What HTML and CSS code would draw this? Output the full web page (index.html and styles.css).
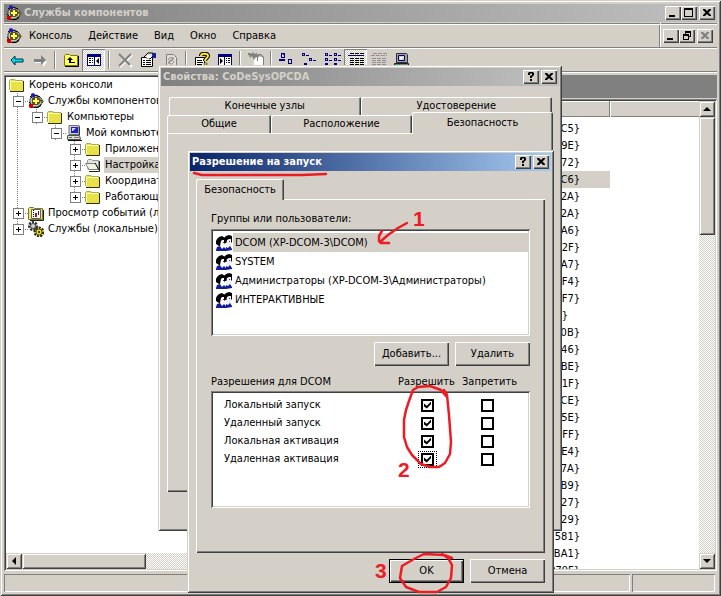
FILE: index.html
```html
<!DOCTYPE html>
<html lang="ru">
<head>
<meta charset="utf-8">
<title>Службы компонентов</title>
<link rel="stylesheet" href="styles.css">
</head>
<body>
<svg class="defs" aria-hidden="true">
  <defs>
    <symbol id="i-app" viewBox="0 0 16 16">
      <path d="M4 3l5-1 4 3 2 3-2 4-4 2H5L2 11V6z" fill="#c8c4b8" stroke="#404040" stroke-width="1"/>
      <path d="M2 3l3 3M1 9l3 3M14 8l-4-2M6 2l6 2" stroke="#000" stroke-width="1"/>
      <path d="M5 4h5l2 2v4l-2 2H5L4 10V6z" fill="#605020"/>
      <path d="M7 5h2v2h2v2H9v2H7V9H5V7h2z" fill="#ffff60"/>
      <path d="M3 1l2-1 2 1v3H4L3 3z" fill="#1a1acc"/><path d="M1 11h4v4H2l-1-1z" fill="#d00000"/><circle cx="14" cy="8.500" r="1.500" fill="#607018"/>
      <path d="M5 14h5l3-3v2l-3 2H6z" fill="#000"/>
    </symbol>
    <symbol id="i-folder" viewBox="0 0 16 16">
      <path d="M1 3l1-1h4l1 1h7v11H1z" fill="#e8e248"/><path d="M.5 13V3.500L1.500 2.500h4l1 1h7.500" fill="none" stroke="#b0a850"/>
      <path d="M1.500 13V4.500H13" fill="none" stroke="#ffffb0"/><path d="M14.500 4v10.500H1" fill="none" stroke="#303018"/>
    </symbol>
    <symbol id="i-open" viewBox="0 0 16 16">
      <path d="M2.500 3.500l1-1h3l1 1h6v9H3z" fill="#e8e4dc" stroke="#909090"/><path d="M.5 6.500h10l3 6H4z" fill="#f4f2e0" stroke="#808080"/>
      <path d="M10 6l4 7M14.500 4v10.500H4" fill="none" stroke="#202020"/>
    </symbol>
    <symbol id="i-pc" viewBox="0 0 16 16">
      <path d="M3 .5h10v9H3z" fill="#d4d0c8" stroke="#707070"/><path d="M13 1l1 1v8h-1" fill="#303030"/>
      <path d="M5 2h7v6H5z" fill="#2020c0"/><path d="M6 3h4L7 6H6z" fill="#d0d8ff"/><path d="M1.500 10.500h12l1 4h-13z" fill="#e0dcd4" stroke="#505050"/>
      <path d="M3 12h3v1H3z" fill="#00a060"/><path d="M8 12h5v1H8z" fill="#808080"/><path d="M2 15h14v1H2z" fill="#101010"/>
    </symbol>
    <symbol id="i-events" viewBox="0 0 16 16">
      <path d="M.5 3.500l1-1h4l1 1h8v11H.5z" fill="#f0e868" stroke="#807820"/><path d="M3.500 4.500h9v9h-9z" fill="#fff" stroke="#606060"/>
      <path d="M5 5h1v1H5zm0 2h1v1H5zm0 2h1v1H5zm0 2h1v1H5z" fill="#000"/><path d="M7 8h2v4H7z" fill="#e00000"/><path d="M10 6h1v4h-1z" fill="#1010e0"/><path d="M2 15.500h13.500V5" fill="none" stroke="#202020"/>
    </symbol>
    <symbol id="i-gears" viewBox="0 0 16 16">
      <circle cx="5" cy="5" r="3.500" fill="none" stroke="#303030" stroke-width="3" stroke-dasharray="2 1"/><circle cx="5" cy="5" r="2.500" fill="#d0d0d0" stroke="#505050"/>
      <circle cx="11" cy="11" r="4" fill="none" stroke="#303000" stroke-width="3" stroke-dasharray="2 1"/><circle cx="11" cy="11" r="3" fill="#f0e020" stroke="#605800"/><circle cx="11" cy="11" r="1" fill="#000"/>
    </symbol>
    <symbol id="i-users" viewBox="0 0 16 16">
      <path d="M8 3l2-2 3-1 3 1v4l-2-1-2 1-1 3H8z" fill="#000"/>
      <path d="M11 5l2-1h2v3l1 1-1 1v2l-3 1-2-2z" fill="#f0f0f4"/><path d="M15 4h1v4l-1-1z" fill="#000"/><path d="M13 6h1v1h-1z" fill="#2030c0"/>
      <path d="M1 4l2-2 3-1 3 2v3L7 5 5 6v5H3L0 9V6z" fill="#000"/>
      <path d="M5 6l2-1h1l1 3-1 1v2l-2 1-2-1z" fill="#fff"/><path d="M7 7h1v1H7z" fill="#2030c0"/><path d="M8 5h1v4L8 8z" fill="#000"/>
      <path d="M0 15l1-3 3-1 2 3 2-2 2 2v2H0zM10 12l2 1 2-2 2 3v1l-6 1z" fill="#101c98"/>
    </symbol>
    <symbol id="i-min" viewBox="0 0 12 10"><path d="M2 7h6v2H2z"/></symbol>
    <symbol id="i-max" viewBox="0 0 12 10"><path d="M1 0h9v9H1zM2 2v6h7V2z" fill-rule="evenodd"/></symbol>
    <symbol id="i-restore" viewBox="0 0 12 10"><path d="M4 0h6v6H8v3H2V3h2zM5 2v1h3v2h1V2zM3 5v3h4V5z" fill-rule="evenodd"/></symbol>
    <symbol id="i-x" viewBox="0 0 12 10"><path d="M2 1h2l2 2 2-2h2v1L7.500 4.500 10 7v1H8L6 6 4 8H2V7l2.500-2.500L2 2z"/></symbol>
    <symbol id="i-q" viewBox="0 0 12 10"><path d="M3 1l1-1h4l1 1v2L7 5v1H5V4l2-1V1.500H5V3H3zM5 7h2v2H5z"/></symbol>
    <symbol id="i-up" viewBox="0 0 8 8"><path d="M4 2l4 4H0z"/></symbol>
    <symbol id="i-down" viewBox="0 0 8 8"><path d="M0 2h8L4 6z"/></symbol>
    <symbol id="i-left" viewBox="0 0 8 8"><path d="M2 4l4-4v8z"/></symbol>
  </defs>
</svg>

<main class="window">
  <header class="title inactive">
    <svg class="ico"><use href="#i-app"/></svg>
    <h1>Службы компонентов</h1>
    <button class="cap" aria-label="Свернуть"><svg><use href="#i-min"/></svg></button>
    <button class="cap" aria-label="Развернуть"><svg><use href="#i-max"/></svg></button>
    <button class="cap last" aria-label="Закрыть"><svg><use href="#i-x"/></svg></button>
  </header>

  <div class="menuband">
    <nav class="menu">
      <svg class="ico"><use href="#i-app"/></svg>
      <button>Консоль</button><button>Действие</button><button>Вид</button><button>Окно</button><button>Справка</button>
    </nav>
    <div class="mdi">
      <button class="cap" aria-label="Свернуть окно"><svg><use href="#i-min"/></svg></button>
      <button class="cap" aria-label="Восстановить окно"><svg><use href="#i-restore"/></svg></button>
      <button class="cap last" disabled aria-label="Закрыть окно"><svg><use href="#i-x"/></svg></button>
    </div>
  </div>

  <div class="toolbar">
    <button aria-label="Назад"><svg class="ico" viewBox="0 0 16 16"><path d="M2 8l4-4v3h8v3H6v3z" fill="#00e0e8" stroke="#003048"/></svg></button>
    <button aria-label="Вперед"><svg class="ico" viewBox="0 0 16 16"><path d="M3 8h7V5l5 5-4 5v-4H3z" fill="#fff"/><path d="M2 7h7V3l5 5-5 5v-3H2z" fill="#808080"/></svg></button>
    <i class="sep"></i>
    <button aria-label="Вверх"><svg class="ico" viewBox="0 0 16 16"><path d="M1.500 13.500v-10l1-1h4l1 1h7v10z" fill="#ffff70" stroke="#807800"/><path d="M7 5l3 3H8v2h4v1H6V8H4z"/><path d="M15.500 4v10.500H2" fill="none" stroke="#000"/></svg></button>
    <button class="on" aria-label="Дерево консоли"><svg class="ico" viewBox="0 0 16 16"><path d="M1 2h14v12H1z" fill="#000080"/><path d="M2 5h6v8H2zM9 5h5v8H9z" fill="#fff"/><path d="M3 6h2v1H3zm0 2h2v1H3zm0 2h2v1H3zM6 6h1v1H6zm0 2h1v1H6zm0 2h1v1H6zM13 6v6L10 9z"/></svg></button>
    <i class="sep"></i>
    <button aria-label="Удалить объект"><svg class="ico" viewBox="0 0 16 16"><path d="M3 3l12 12M15 3L3 15" stroke="#fff" stroke-width="2"/><path d="M2 2l11 11M14 2L2 14" stroke="#808080" stroke-width="2"/></svg></button>
    <button aria-label="Свойства"><svg class="ico" viewBox="0 0 16 16"><path d="M1.500 5.500h11v9h-11z" fill="#fff" stroke="#000"/><path d="M3 8h2v1H3zm3 0h5v1H6zM3 10h2v1H3zm3 0h5v1H6zM3 12h2v1H3zm3 0h5v1H6z"/><path d="M4 5l4-4h5v3l-3 3z" fill="#e8e4d8" stroke="#000"/><path d="M6 5l3-2 2 2-3 2z" fill="#fff"/><path d="M12 1h4v5h-3z" fill="#1020a0"/></svg></button>
    <button aria-label="Обновить"><svg class="ico" viewBox="0 0 16 16"><path d="M3.500 14.500v-12h7l3 3v9z" fill="#e4e0d8" stroke="#808080"/><path d="M5 8c1-3 4-3 5-1M11 9c-1 4-4 4-5 1M10 5v3H7M6 12V9h3" fill="none" stroke="#808080"/></svg></button>
    <i class="sep"></i>
    <button aria-label="Справка"><svg class="ico" viewBox="0 0 16 16"><path d="M1.500 5.500h9v9h-9z" fill="#fff" stroke="#000"/><path d="M3 8h5v1H3zm0 2h6v1H3zm0 2h5v1H3z"/><path d="M7 4c0-3 7-3 7 0 0 2-3 2-3 5" fill="none" stroke="#000" stroke-width="4"/><path d="M7 4c0-3 7-3 7 0 0 2-3 2-3 5" fill="none" stroke="#ffe818" stroke-width="2"/><path d="M10 11h3v2h-3z" fill="#ffe818" stroke="#000" stroke-width=".5"/></svg></button>
    <button aria-label="Панель"><svg class="ico" viewBox="0 0 16 16"><path d="M1 2h14v12H1z" fill="#000080"/><path d="M2 5h5v8H2zM8 5h6v8H8z" fill="#fff"/><path d="M9 6h1v1H9zm0 2h1v1H9zm0 2h1v1H9zm2-4h2v1h-2zm0 2h2v1h-2zm0 2h2v1h-2zM3 6v6l3-3z"/></svg></button>
    <i class="sep"></i>
    <button aria-label="Создать"><svg class="ico" viewBox="0 0 16 16"><path d="M6 5h10v11H6z" fill="#fff"/><path d="M0 1h2l1 1 2-2 1 2 3-1v3l2 2-3-1-2 3-2-4-2 2-1-3H0zM7 5l3-3h3l3 3v11h-1V6l-3-3-2 2v4H9V5z" fill="#808080"/></svg></button>
    <i class="sep"></i>
    <button aria-label="Крупные значки"><svg class="ico blue" viewBox="0 0 16 16"><path d="M2 1h4v5H2zM3 2v3h2V3zM0 7h6v2H0zM9 7h4v5H9zm1 1v3h2V8z" fill-rule="evenodd"/></svg></button>
    <button aria-label="Мелкие значки"><svg class="ico blue" viewBox="0 0 16 16"><path d="M0 1h3v3H0zM1 2v1h1V2zM4 3h3v1H4zM7 6h3v3H7zm1 1v1h1V7zM11 8h3v1h-3zM2 11h3v3H2zM6 13h3v1H6z" fill-rule="evenodd"/></svg></button>
    <button aria-label="Список"><svg class="ico blue" viewBox="0 0 16 16"><path d="M0 1h3v3H0zM1 2v1h1V2zM4 3h3v1H4zM9 1h3v3H9zm1 1v1h1V2zM13 3h3v1h-3zM0 6h3v3H0zm1 1v1h1V7zM4 8h3v1H4zM9 6h3v3H9zm1 1v1h1V7zM13 8h3v1h-3zM0 11h3v3H0zM4 13h3v1H4zM9 11h3v3H9zM13 13h3v1h-3z" fill-rule="evenodd"/></svg></button>
    <button class="on" aria-label="Таблица"><svg class="ico" viewBox="0 0 16 16"><path d="M0 3h16v1H0z" fill="#000080"/><path d="M2 1.500h14M2 6.500h14M2 8.500h14M2 10.500h14M2 12.500h14M2 14.500h14" stroke="#000" stroke-dasharray="4 1"/></svg></button>
    <button aria-label="Отчет"><svg class="ico" viewBox="0 0 16 16"><path d="M2 1.500h14M0 3.500h16M1 6.500h14M1 8.500h14M1 10.500h14M1 12.500h14" stroke="#909090" stroke-dasharray="4 1"/></svg></button>
    <button aria-label="Компьютер"><svg class="ico" viewBox="0 0 16 16"><path d="M2.500 1.500h10l1 1v8h-11z" fill="#a0a0a0" stroke="#303030"/><path d="M4.500 3.500h6v5h-6z" fill="#d4d0c8" stroke="#000080"/><path d="M6 5h4L6 8z" fill="#fff"/><path d="M.5 11.500h14v3H.5z" fill="#808080" stroke="#202020"/><path d="M3 12h3v1H3z" fill="#00b080"/></svg></button>
  </div>

  <div class="panes">
    <section class="treepane">
      <ul class="tree">
        <li><svg class="ico"><use href="#i-folder"/></svg><span>Корень консоли</span></li>
        <li><i class="box minus"></i><svg class="ico"><use href="#i-app"/></svg><span>Службы компонентов</span></li>
        <li><i class="line"></i><i class="box minus"></i><svg class="ico"><use href="#i-folder"/></svg><span>Компьютеры</span></li>
        <li><i class="line"></i><i></i><i class="box minus"></i><svg class="ico"><use href="#i-pc"/></svg><span>Мой компьютер</span></li>
        <li><i class="line"></i><i></i><i></i><i class="box"></i><svg class="ico"><use href="#i-folder"/></svg><span>Приложения</span></li>
        <li><i class="line"></i><i></i><i></i><i class="box"></i><svg class="ico"><use href="#i-open"/></svg><span class="sel">Настройка DCOM</span></li>
        <li><i class="line"></i><i></i><i></i><i class="box"></i><svg class="ico"><use href="#i-folder"/></svg><span>Координатор</span></li>
        <li><i class="line"></i><i></i><i></i><i class="box end"></i><svg class="ico"><use href="#i-folder"/></svg><span>Работающие</span></li>
        <li><i class="box"></i><svg class="ico"><use href="#i-events"/></svg><span>Просмотр событий (локальных)</span></li>
        <li><i class="box end"></i><svg class="ico"><use href="#i-gears"/></svg><span>Службы (локальные)</span></li>
      </ul>
      <div class="hscroll"><button aria-label="Влево"><svg><use href="#i-left"/></svg></button><div class="thumb"></div></div>
    </section>
    <section class="right">
      <div class="desc"></div>
      <div class="list">
        <div class="table">
          <div class="head"><span></span><span></span></div>
          <ul class="ids">
            <li>12C5}</li><li>D9E}</li><li>972}</li><li class="sel">C6}</li><li>82A}</li><li>82A}</li><li>A6}</li><li>42F}</li><li>AA7}</li>
            <li>DF4}</li><li>AF7}</li><li class="short">a}</li><li>0B}</li><li>46}</li><li>BE}</li><li>81F}</li><li>3CE}</li><li>15E}</li>
            <li>0FF}</li><li>E4}</li><li>87A}</li><li>B9}</li><li>27}</li><li>829}</li><li>581}</li><li>BA1}</li><li>079F}</li>
          </ul>
        </div>
        <div class="vscroll"><button aria-label="Вверх по списку"><svg><use href="#i-up"/></svg></button><div class="thumb"></div><button aria-label="Вниз по списку"><svg><use href="#i-down"/></svg></button></div>
      </div>
    </section>
  </div>

  <footer class="status"><span></span><span></span></footer>
</main>

<section class="dialog props">
  <header class="title inactive"><h2>Свойства: CoDeSysOPCDA</h2>
    <button class="cap" aria-label="Справка"><svg><use href="#i-q"/></svg></button>
    <button class="cap last" aria-label="Закрыть"><svg><use href="#i-x"/></svg></button></header>
  <div class="sheet">
    <div class="tabs back"><button class="tab">Конечные узлы</button><button class="tab">Удостоверение</button></div>
    <div class="tabs front"><button class="tab">Общие</button><button class="tab">Расположение</button><button class="tab active">Безопасность</button></div>
    <div class="page"></div>
  </div>
</section>

<section class="dialog launch">
  <header class="title"><h2>Разрешение на запуск</h2>
    <button class="cap" aria-label="Справка"><svg><use href="#i-q"/></svg></button>
    <button class="cap last" aria-label="Закрыть"><svg><use href="#i-x"/></svg></button></header>
  <div class="body">
    <div class="tabs"><button class="tab active">Безопасность</button></div>
    <div class="page">
      <h3>Группы или пользователи:</h3>
      <ul class="users">
        <li class="sel"><svg class="ico"><use href="#i-users"/></svg><span>DCOM (XP-DCOM-3\DCOM)</span></li>
        <li><svg class="ico"><use href="#i-users"/></svg><span>SYSTEM</span></li>
        <li><svg class="ico"><use href="#i-users"/></svg><span>Администраторы (XP-DCOM-3\Администраторы)</span></li>
        <li><svg class="ico"><use href="#i-users"/></svg><span>ИНТЕРАКТИВНЫЕ</span></li>
      </ul>
      <div class="actions"><button class="btn">Добавить...</button><button class="btn">Удалить</button></div>
      <div class="permhead"><span>Разрешения для DCOM</span><span>Разрешить</span><span>Запретить</span></div>
      <div class="perms">
        <div class="perm"><label for="a1">Локальный запуск</label><span class="cell"><input type="checkbox" id="a1" checked></span><span class="cell"><input type="checkbox" aria-label="Запретить локальный запуск"></span></div>
        <div class="perm"><label for="a2">Удаленный запуск</label><span class="cell"><input type="checkbox" id="a2" checked></span><span class="cell"><input type="checkbox" aria-label="Запретить удаленный запуск"></span></div>
        <div class="perm"><label for="a3">Локальная активация</label><span class="cell"><input type="checkbox" id="a3" checked></span><span class="cell"><input type="checkbox" aria-label="Запретить локальную активацию"></span></div>
        <div class="perm"><label for="a4">Удаленная активация</label><span class="cell focus"><input type="checkbox" id="a4" checked></span><span class="cell"><input type="checkbox" aria-label="Запретить удаленную активацию"></span></div>
      </div>
    </div>
    <div class="actions bottom"><button class="btn default">OK</button><button class="btn">Отмена</button></div>
  </div>
</section>

<svg class="marks" width="721" height="596" viewBox="0 0 721 596">
  <g fill="none" stroke="#ed1c24" stroke-width="2.500" stroke-linecap="round" stroke-linejoin="round">
    <path d="M194 173l8 2h100l24-1"/>
    <path d="M407 223l-9 5-10 7-8 7M382 231l-3 5v5l2 2h8"/>
    <path d="M446 396l-5-6-11-4-12 1-5 3-4 11-3 9-2 10v17l3 10 5 8 9 9 9 3h9l6-4 5-9 1-12-2-27-2-20-3-5"/>
    <path d="M452 558l-8-3-20-1-10 5-12 7-2 12 6 9 13 5h18l9-5 5-9 1-13-4-7-6-4"/>
  </g>
  <g class="digits"><text x="413" y="226">1</text><text x="398" y="477">2</text><text x="375" y="578">3</text></g>
</svg>
</body>
</html>
```
FILE: styles.css
```css
:root {
  --face: #d4d0c8;
  --check: repeating-conic-gradient(#fff 0 25%, #d4d0c8 0 50%) 0 0 / 2px 2px;
  --raised: inset 1px 1px #fff, inset -1px -1px #404040, inset -2px -2px #808080;
  --framed: inset 1px 1px #d4d0c8, inset -1px -1px #404040, inset 2px 2px #fff, inset -2px -2px #808080;
  --sunken: inset 1px 1px #808080, inset -1px -1px #fff, inset 2px 2px #404040, inset -2px -2px #d4d0c8;
  --shallow: inset 1px 1px #808080, inset -1px -1px #fff;
}
* { box-sizing: border-box; }
body {
  margin: 0;
  height: 100vh;
  overflow: hidden;
  position: relative;
  background: var(--face);
  color: #000;
  font: 11px/14px "DejaVu Sans Condensed", "DejaVu Sans", sans-serif;
}
button { font: inherit; color: inherit; background: none; border: 0; padding: 0; margin: 0; white-space: nowrap; }
h1, h2, h3 { margin: 0; font-size: 11px; }
h3 { font-weight: normal; }
ul { list-style: none; margin: 0; padding: 0; }
.defs { position: absolute; width: 0; height: 0; }
.ico { width: 16px; height: 16px; flex: none; display: block; }
.blue { fill: #000080; }

.window { height: 100vh; display: flex; flex-direction: column; padding: 4px; background: var(--face); box-shadow: var(--framed); }

.title { height: 18px; flex: none; display: flex; align-items: center; padding: 0 2px; color: #fff; background: linear-gradient(90deg, #0a246a, #a6caf0); }
.title.inactive { color: #d4d0c8; background: linear-gradient(90deg, #808080, #c0c0c0); }
.title h1, .title h2 { flex: 1; white-space: nowrap; }
.title .ico { margin-right: 2px; }
.cap { width: 16px; height: 14px; flex: none; display: grid; place-items: center; color: #000; background: var(--face); box-shadow: var(--raised); }
.cap svg { width: 12px; height: 10px; }
.cap.last { margin-left: 2px; }
.cap:disabled { fill: #808080; }

.menuband { flex: none; height: 24px; margin-top: 1px; display: flex; }
.menu { flex: 1; display: flex; align-items: center; padding: 2px 2px 0; box-shadow: inset 0 1px #808080, inset 0 2px #fff, inset -1px 0 #808080; }
.menu button { padding: 0 8px; }
.menu .ico + button { padding-left: 7px; }
.mdi { display: flex; align-items: center; padding: 2px 4px 0 3px; box-shadow: inset 1px 0 #fff, inset 0 1px #808080, inset 0 2px #fff; }

.toolbar { flex: none; height: 26px; display: flex; align-items: center; padding-left: 1px; box-shadow: inset 0 1px #808080, inset 0 2px #fff, inset 0 -1px #fff, inset 0 -2px #808080; }
.toolbar button { width: 23px; height: 22px; display: grid; place-items: center; }
.toolbar .on { background: var(--check); box-shadow: var(--shallow); }
.sep { width: 8px; height: 18px; background: linear-gradient(90deg, transparent 3px, #808080 3px 4px, #fff 4px 5px, transparent 5px); }

.panes { flex: 1; min-height: 0; margin-top: 2px; display: flex; gap: 4px; }
.treepane { flex: 0 0 28%; display: flex; flex-direction: column; padding: 2px; background: #fff; box-shadow: var(--sunken); }
.tree { flex: 1; overflow: hidden; }
.tree li { height: 16px; display: flex; align-items: center; padding-left: 3px; white-space: nowrap; }
.tree li > i { width: 19px; height: 16px; flex: none; }
.tree span { margin-left: 3px; padding: 0 1px; line-height: 16px; }
.sel { background: var(--face); }
.line, .box { background: repeating-linear-gradient(#808080 0 1px, #fff 1px 2px) 8px 0 / 1px 100% no-repeat; }
.box.end { background-size: 1px 8px; }
.box { position: relative; }
.box::before { content: ""; position: absolute; inset: 8px 0 auto 14px; border-top: 1px dotted #808080; }
.box::after {
  content: ""; position: absolute; left: 4px; top: 3px; width: 9px; height: 9px; border: 1px solid #808080;
  background: linear-gradient(#000, #000) center / 5px 1px no-repeat, linear-gradient(#000, #000) center / 1px 5px no-repeat, #fff;
}
.box.minus::after { background: linear-gradient(#000, #000) center / 5px 1px no-repeat, #fff; }

.hscroll, .vscroll { display: flex; background: var(--check); flex: none; }
.hscroll { height: 16px; }
.vscroll { width: 16px; flex-direction: column; }
.hscroll button, .vscroll button { width: 16px; height: 16px; display: grid; place-items: center; background: var(--face); box-shadow: var(--framed); }
.hscroll svg, .vscroll svg { width: 8px; height: 8px; }
.hscroll .thumb, .vscroll .thumb { background: var(--face); box-shadow: var(--framed); }
.hscroll .thumb { width: 124px; }
.vscroll .thumb { height: 118px; margin-bottom: auto; }

.right { flex: 1; min-width: 0; display: flex; flex-direction: column; }
.desc { height: 23px; flex: none; background: #808080; }
.list { flex: 1; min-height: 0; margin-top: 1px; padding: 2px; display: flex; background: #fff; box-shadow: var(--sunken); }
.table { flex: 1; min-width: 0; overflow: hidden; }
.head { display: flex; height: 16px; margin-bottom: 3px; }
.head span { flex: 1; background: var(--face); box-shadow: inset 1px 1px #fff, inset 0 -1px #808080; }
.head span + span { flex: 0 0 90px; border-left: 1px solid #808080; }
.ids { margin-right: 89px; }
.ids li { height: 17px; line-height: 18px; padding-right: 30px; text-align: right; }
.ids .short { padding-right: 42px; }

.status { flex: none; height: 18px; margin-top: 3px; display: flex; gap: 2px; padding-right: 2px; }
.status span { flex: 1; box-shadow: var(--shallow); }
.status span + span { flex: 0 0 83px; }

.dialog { position: absolute; display: flex; flex-direction: column; padding: 3px; background: var(--face); box-shadow: var(--framed); }
.props { left: 158px; top: 65px; width: 404px; height: 466px; }
.launch { left: 187px; top: 150px; width: 367px; height: 443px; }

.tabs { display: flex; flex: none; }
.tab { flex: 1; height: 19px; border-radius: 2px 2px 0 0; background: var(--face); box-shadow: inset 1px 1px #fff, inset -1px 0 #404040, inset -2px 0 #808080; }
.page { background: var(--face); box-shadow: var(--raised); }
.sheet { flex: 1; display: flex; flex-direction: column; padding: 11px 6px 36px; }
.back { padding: 0 1px 0 2px; }
.back .tab { height: 18px; }
.front { align-items: flex-end; }
.front .tab { flex: 0 0 104px; height: 18px; }
.front .tab + .tab { flex: 1; }
.front .tab.active { height: 22px; margin-top: -3px; margin-bottom: -1px; z-index: 1; }
.sheet .page { flex: 1; }

.body { flex: 1; display: flex; flex-direction: column; padding: 8px 6px 7px; }
.body .tab { flex: 0 0 88px; height: 21px; margin-bottom: -1px; z-index: 1; }
.body .page { flex: 1; padding: 13px 15px 0; }
.users { margin-top: 3px; height: 107px; padding: 4px 2px; background: #fff; box-shadow: var(--sunken); }
.users li { height: 19px; display: flex; align-items: center; background: none; }
.users .ico { margin: 0 1px 0 3px; }
.users span { flex: 1; padding-left: 2px; line-height: 19px; white-space: nowrap; }
.users .sel span { background: var(--face); }
.actions { display: flex; justify-content: flex-end; gap: 6px; margin-top: 6px; }
.btn { width: 75px; height: 24px; background: var(--face); box-shadow: var(--raised); }
.btn.default { border: 1px solid #000; }
.permhead { display: grid; grid-template-columns: 1fr 56px 54px; gap: 8px; margin-top: 9px; padding-right: 14px; white-space: nowrap; }
.perms { margin-top: 2px; height: 117px; padding: 5px 33px 0 13px; background: #fff; box-shadow: var(--sunken); }
.perm { display: grid; grid-template-columns: 1fr 19px 19px; column-gap: 41px; align-items: center; height: 18px; }
.cell { display: grid; place-items: center; height: 17px; }
.focus { outline: 1px dotted #000; outline-offset: -1px; }
.perm input { appearance: none; margin: 0; width: 13px; height: 13px; border: 2px solid #000; background: #fff; display: grid; place-items: center; }
.perm input:checked::before { content: ""; width: 7px; height: 7px; background: #000; clip-path: polygon(0 28%, 40% 60%, 100% 0, 100% 40%, 40% 100%, 0 70%); }

.marks { position: absolute; left: 0; top: 0; pointer-events: none; }
.digits { font: bold 21px/21px "Liberation Sans", sans-serif; fill: #ed1c24; }
```
